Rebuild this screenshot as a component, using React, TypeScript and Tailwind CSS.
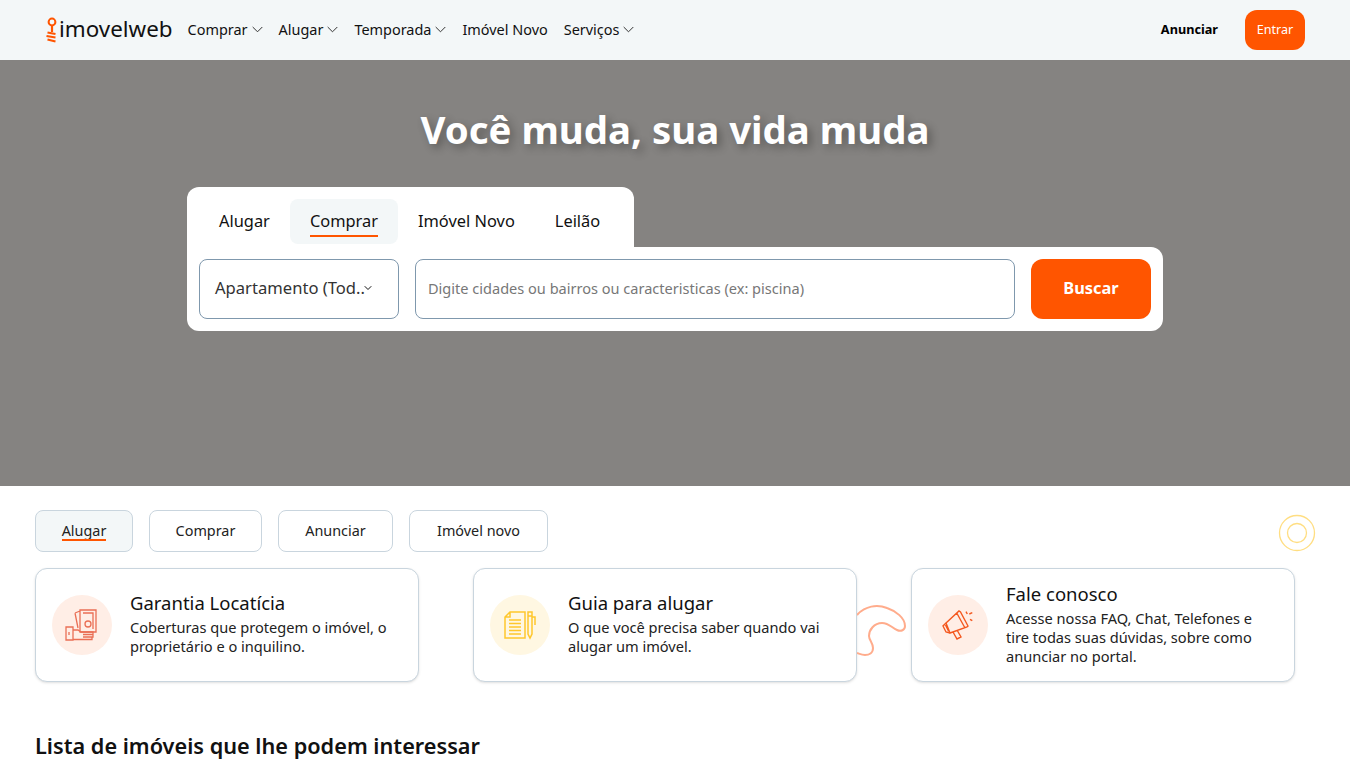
import { ChevronDown } from 'lucide-react'

const navItems = [
  { label: 'Comprar', arrow: true },
  { label: 'Alugar', arrow: true },
  { label: 'Temporada', arrow: true },
  { label: 'Imóvel Novo', arrow: false },
  { label: 'Serviços', arrow: true },
]

const pills = [
  { label: 'Alugar', className: 'w-[98px] bg-[#f3f7f8]' },
  { label: 'Comprar', className: 'w-[113px]' },
  { label: 'Anunciar', className: 'w-[115px]' },
  { label: 'Imóvel novo', className: 'w-[139px]' },
]

function Logo() {
  return (
    <div className="flex items-center">
      <svg width="14" height="26" viewBox="0 0 14 26" fill="none" stroke="#ff5500" strokeWidth="2">
        <circle cx="7" cy="5" r="3.4" />
        <path d="M7 8.5V15M2.5 15.5l8 1.5M1.5 19l9 1.5M2.5 22.5l8 2" strokeWidth="2.2" />
      </svg>
      <span className="text-[22.4px] leading-none text-[#111] -mt-[2px]">imovelweb</span>
    </div>
  )
}

function NavArrow() {
  return (
    <svg width="11" height="7" viewBox="0 0 11 7" fill="none" stroke="#333" strokeWidth="1">
      <path d="M.7 1l4.8 4.8L10.3 1" />
    </svg>
  )
}

function Header() {
  return (
    <header className="h-[60px] bg-[#f3f7f8] flex items-center pl-[45px] pr-[45px]">
      <Logo />
      <nav className="flex items-center gap-4 ml-[15px]">
        {navItems.map((item) => (
          <a key={item.label} className="flex items-center gap-1 text-[14.45px] text-[#111]">
            {item.label}
            {item.arrow && <NavArrow />}
          </a>
        ))}
      </nav>
      <a className="ml-auto text-[12.7px] font-bold text-black">Anunciar</a>
      <button className="ml-[27px] w-[60px] h-10 rounded-xl bg-[#ff5500] text-white text-[12.6px]">Entrar</button>
    </header>
  )
}

function SearchBox() {
  const tabs = ['Alugar', 'Comprar', 'Imóvel Novo', 'Leilão']
  return (
    <div className="w-[976px] mt-[28px]">
      <div className="w-[447px] h-[60px] bg-white rounded-t-xl flex items-start pt-3 pl-3">
        {tabs.map((tab) => (
          <div
            key={tab}
            className={`h-[45px] px-5 flex items-center justify-center rounded-lg text-[16.4px] text-[#111] ${tab === 'Comprar' ? 'bg-[#f3f7f8]' : ''}`}
          >
            <span className="relative">
              {tab}
              {tab === 'Comprar' && <span className="absolute left-0 right-0 -bottom-[3px] h-[2px] bg-[#ff5500]" />}
            </span>
          </div>
        ))}
      </div>
      <div className="h-[84px] bg-white rounded-b-xl rounded-tr-xl flex items-center gap-4 px-3">
        <div className="w-[200px] h-[60px] rounded-lg border border-[#7f98ad] flex items-center pl-[15px] text-[16.6px] text-[#333]">
          <span className="whitespace-nowrap -mt-[2px]">Apartamento (Tod..</span>
          <ChevronDown className="w-3 h-3 shrink-0 -ml-[3px] -mt-[2px] text-[#111]" strokeWidth={2} />
        </div>
        <div className="w-[600px] h-[60px] rounded-lg border border-[#7f98ad] flex items-center px-3 text-[14.55px] text-[#777]">
          Digite cidades ou bairros ou caracteristicas (ex: piscina)
        </div>
        <button className="w-[120px] h-[60px] rounded-xl bg-[#ff5500] text-white font-bold text-[16.4px] pb-[2px]">Buscar</button>
      </div>
    </div>
  )
}

function Card({ title, text, tint, children }: { title: string; text: string[]; tint: string; children: React.ReactNode }) {
  return (
    <div className="w-[384px] h-[114px] rounded-xl border border-[#c9d5de] bg-white shadow-sm flex items-center px-4">
      <div className={`w-[60px] h-[60px] rounded-full flex items-center justify-center shrink-0 ${tint}`}>{children}</div>
      <div className="ml-[18px] pb-[3px]">
        <div className="text-[18.5px] leading-6 text-[#111] mb-[3px]">{title}</div>
        {text.map((line) => (
          <div key={line} className="text-[14.6px] leading-[19px] text-[#222] whitespace-nowrap">{line}</div>
        ))}
      </div>
    </div>
  )
}

export default function App() {
  return (
    <div className="relative h-[768px] overflow-hidden bg-white font-['Noto_Sans',sans-serif]">
      <Header />
      <section className="h-[426px] bg-[#858381] flex flex-col items-center">
        <h1 className="mt-[39px] text-[38.4px] leading-[60px] font-bold text-white [text-shadow:4px_4px_8px_rgba(0,0,0,0.3)]">Você muda, sua vida muda</h1>
        <SearchBox />
      </section>
      <section className="px-[35px] pt-6">
        <div className="flex gap-4">
          {pills.map((pill, i) => (
            <div key={pill.label} className={`h-[42px] rounded-lg border border-[#c9d5de] flex items-center justify-center text-[14.4px] text-[#222] ${pill.className}`}>
              <span className="relative">
                {pill.label}
                {i === 0 && <span className="absolute left-0 right-0 bottom-[1px] h-[2px] bg-[#ff5500]" />}
              </span>
            </div>
          ))}
        </div>
        <div className="flex gap-[54px] mt-4">
          <Card title="Garantia Locatícia" text={['Coberturas que protegem o imóvel, o', 'proprietário e o inquilino.']} tint="bg-[#ffeee6]">
            <svg width="34" height="34" viewBox="0 0 34 34" fill="none" stroke="#ea6f55" strokeWidth="1.3">
              <path d="M15 2h16v22H15zM18 5h10v16M10 5l5-2M10 5l3 15" />
              <circle cx="23" cy="16" r="3" />
              <path d="M1 19h7v13H1zM4 24v3M8 22h5l3 2h12v2.5H18M28 26.5V29H18M27 29v2.5H8" />
            </svg>
          </Card>
          <Card title="Guia para alugar" text={['O que você precisa saber quando vai', 'alugar um imóvel.']} tint="bg-[#fff7e2]">
            <svg width="34" height="34" viewBox="0 0 34 34" fill="none" stroke="#ffc72c" strokeWidth="1.5">
              <path d="M7 4h15v26H2V9zM7 4v5H2M6 12h12M6 15.5h12M6 19h12M6 22.5h12M6 26h12" />
              <path d="M25 4h4v22l-2 4-2-4zM25 8h4M29 9h3v8" />
            </svg>
          </Card>
          <Card title="Fale conosco" text={['Acesse nossa FAQ, Chat, Telefones e', 'tire todas suas dúvidas, sobre como', 'anunciar no portal.']} tint="bg-[#ffeee6]">
            <svg width="34" height="34" viewBox="0 0 34 34" fill="none" stroke="#f4581f" strokeWidth="1.4">
              <path d="M5 15L18 3l1.5 1L27 18l-1 1-17 6zM16 5.5l8 14.5M5 15l-3 3 3 6 4 1M4.5 17L7.5 23M12 24l4 7 4-2-4-7" />
              <path d="M25 3.7L26.3 6M28.3 6l3-1.3M29 11.3l2.3 1.4" />
            </svg>
          </Card>
        </div>
        <h2 className="mt-[48px] text-[21.7px] font-semibold text-[#111]">Lista de imóveis que lhe podem interessar</h2>
      </section>
      {/* decoracao */}
      <svg className="absolute left-[857px] top-[604px]" width="50" height="52" viewBox="0 0 50 52" fill="none" stroke="#ffac8c" strokeWidth="2">
        <path d="M0 11C8 2 20 0 30 4c9 3 18 10 18 18 0 4-4 6-8 4-5-2-8-7-15-7-8 0-13 7-13 13 0 4 4 7 4 12 0 5-4 7-8 7-3 0-5-1-8-2" />
      </svg>
      <svg className="absolute left-[1278px] top-[514px]" width="38" height="38" viewBox="0 0 38 38" fill="none" stroke="#ffde82" strokeWidth="1.3">
        <circle cx="19" cy="19" r="17.5" />
        <circle cx="19" cy="19" r="9.5" />
      </svg>
    </div>
  )
}
